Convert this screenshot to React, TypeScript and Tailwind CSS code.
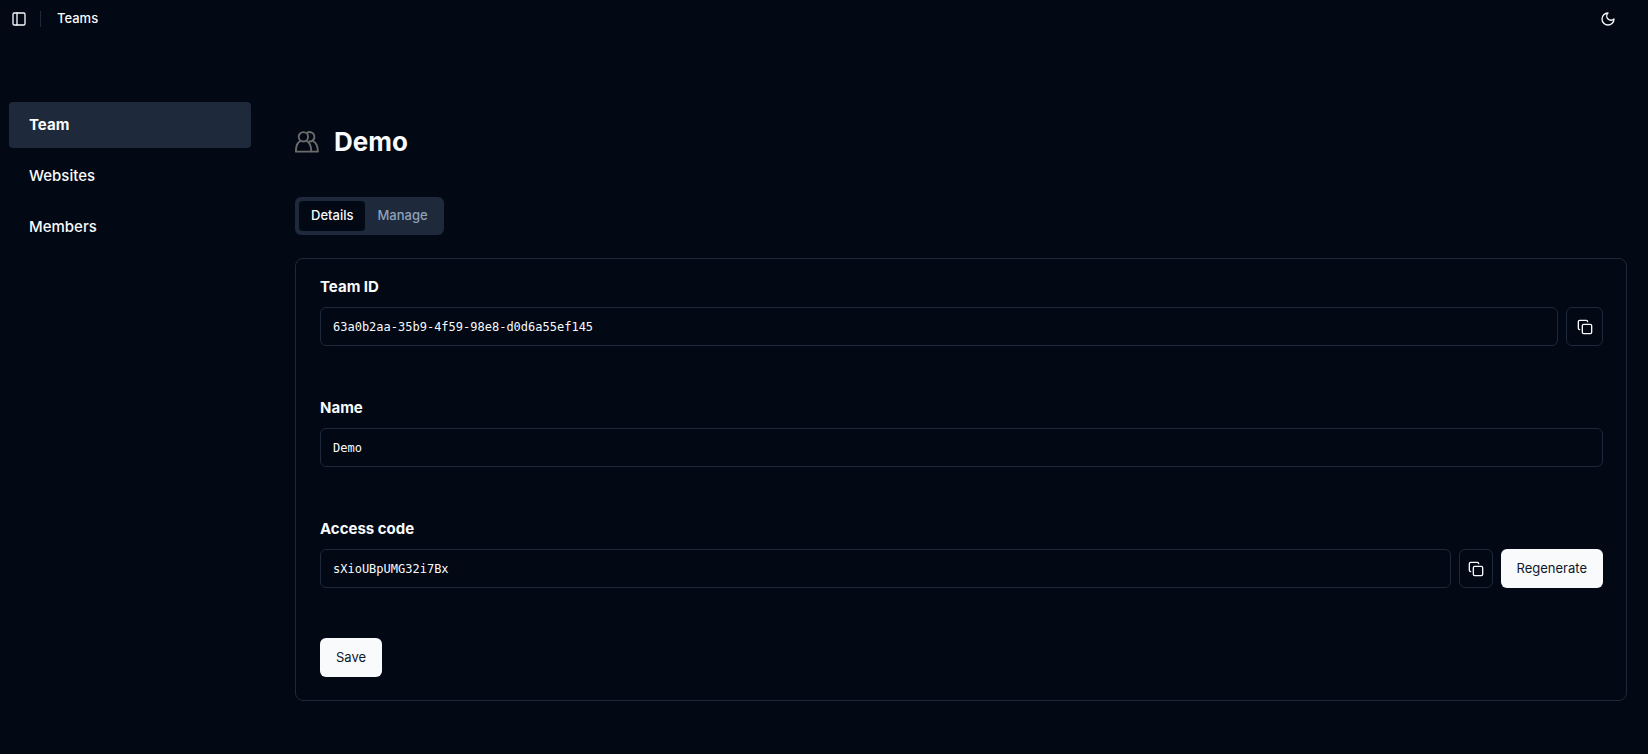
'use client';
import React, { useState } from 'react';
import { Copy, PanelLeft } from 'lucide-react';

const menuItems = ['Team', 'Websites', 'Members'];

const UsersIcon = () => (
  <svg width="24" height="24" viewBox="0 0 24 24" fill="none" stroke="#6b6b6b" strokeWidth="1.9" strokeLinejoin="round" aria-hidden="true">
    <circle cx="8.4" cy="6.8" r="4.7" />
    <path d="M11.8 3.1a4.7 4.7 0 1 1 1.6 8.2" />
    <path d="M5.6 10.8C2.4 12.2.9 15.6.9 21.600h15.400c0-6-1.700-9.400-4.900-10.800" />
    <path d="M17.600 10.800c3.400 1.400 5.300 4.800 5.300 10.800h-6.600" />
  </svg>
);

const MoonIcon = () => (
  <svg width="16" height="16" viewBox="0 0 24 24" fill="none" stroke="currentColor" strokeWidth="2" strokeLinecap="round" strokeLinejoin="round" aria-hidden="true">
    <path d="M12 3a6 6 0 0 0 9 9 9 9 0 1 1-9-9Z" />
  </svg>
);

const inputStyle =
  "h-[39px] min-w-0 flex-1 rounded-md border border-[#1e293b] bg-transparent px-3 font-['DejaVu_Sans_Mono',monospace] text-xs text-slate-50 outline-none";
const iconButton = 'flex h-[39px] items-center justify-center rounded-md border border-[#1e293b]';
const whiteButton = 'rounded-md bg-slate-50 px-4 text-[13px] text-slate-900';
const labelStyle = 'mb-2 block text-[15px] leading-6 font-bold';

const App = () => {
  const [active, setActive] = useState('Team');
  const [tab, setTab] = useState('Details');
  const [name, setName] = useState('Demo');

  return (
    <div className="min-h-screen bg-[#020814] font-['Inter',sans-serif] text-slate-50">
      <header className="flex h-[37px] items-center pl-[11px] pr-8">
        <button aria-label="Toggle sidebar">
          <PanelLeft size={16} />
        </button>
        <div className="ml-[13px] h-4 w-px bg-[#1e293b]" />
        <a href="#" className="ml-4 text-[13px] font-medium">Teams</a>
        <button aria-label="Toggle theme" className="ml-auto">
          <MoonIcon />
        </button>
      </header>

      <div className="flex pl-[9px] pr-[21px] pt-[65px]">
        {/* Sidebar */}
        <nav className="w-[242px] shrink-0">
          <ul className="flex flex-col gap-[5px]">
            {menuItems.map((item) => (
              <li key={item}>
                <a
                  href="#"
                  onClick={() => setActive(item)}
                  className={`flex h-[46px] items-center rounded px-5 text-[15px] ${
                    active === item ? 'bg-[#1e293b] font-bold' : 'font-medium'
                  }`}
                >
                  {item}
                </a>
              </li>
            ))}
          </ul>
        </nav>

        <main className="ml-11 min-w-0 flex-1 pt-5">
          <div className="flex h-[39px] items-center gap-[15px]">
            <UsersIcon />
            <h1 className="text-[26px] font-bold">Demo</h1>
          </div>

          {/* Tabs */}
          <div role="tablist" className="mt-9 flex h-[38px] w-fit items-center rounded-md bg-[#1e293b] p-1">
            {['Details', 'Manage'].map((t) => (
              <button
                key={t}
                role="tab"
                aria-selected={tab === t}
                onClick={() => setTab(t)}
                className={`h-[30px] rounded px-3 text-[13px] font-medium ${
                  tab === t ? 'bg-[#020814] text-slate-50' : 'text-slate-400'
                }`}
              >
                {t}
              </button>
            ))}
          </div>

          <form className="mt-[23px] rounded-lg border border-[#1e293b] pb-[23px] pl-6 pr-[23px] pt-4" onSubmit={(e) => e.preventDefault()}>
            <div className="flex flex-col gap-[50px]">
              <div>
                <label htmlFor="team-id" className={labelStyle}>Team ID</label>
                <div className="flex gap-2">
                  <input id="team-id" className={inputStyle} readOnly value="63a0b2aa-35b9-4f59-98e8-d0d6a55ef145" />
                  <button type="button" aria-label="Copy team ID" className={`${iconButton} w-[37px]`}>
                    <Copy size={16} />
                  </button>
                </div>
              </div>

              <div>
                <label htmlFor="name" className={labelStyle}>Name</label>
                <div className="flex">
                  <input id="name" className={inputStyle} value={name} onChange={(e) => setName(e.target.value)} />
                </div>
              </div>

              <div>
                <label htmlFor="access-code" className={labelStyle}>Access code</label>
                <div className="flex gap-2">
                  <input id="access-code" className={inputStyle} readOnly value="sXioUBpUMG32i7Bx" />
                  <button type="button" aria-label="Copy access code" className={`${iconButton} w-[34px]`}>
                    <Copy size={16} />
                  </button>
                  <button type="button" className={whiteButton}>Regenerate</button>
                </div>
              </div>
            </div>

            <button type="submit" className={`${whiteButton} mt-[50px] h-[39px]`}>Save</button>
          </form>
        </main>
      </div>
    </div>
  );
};

export default App;
